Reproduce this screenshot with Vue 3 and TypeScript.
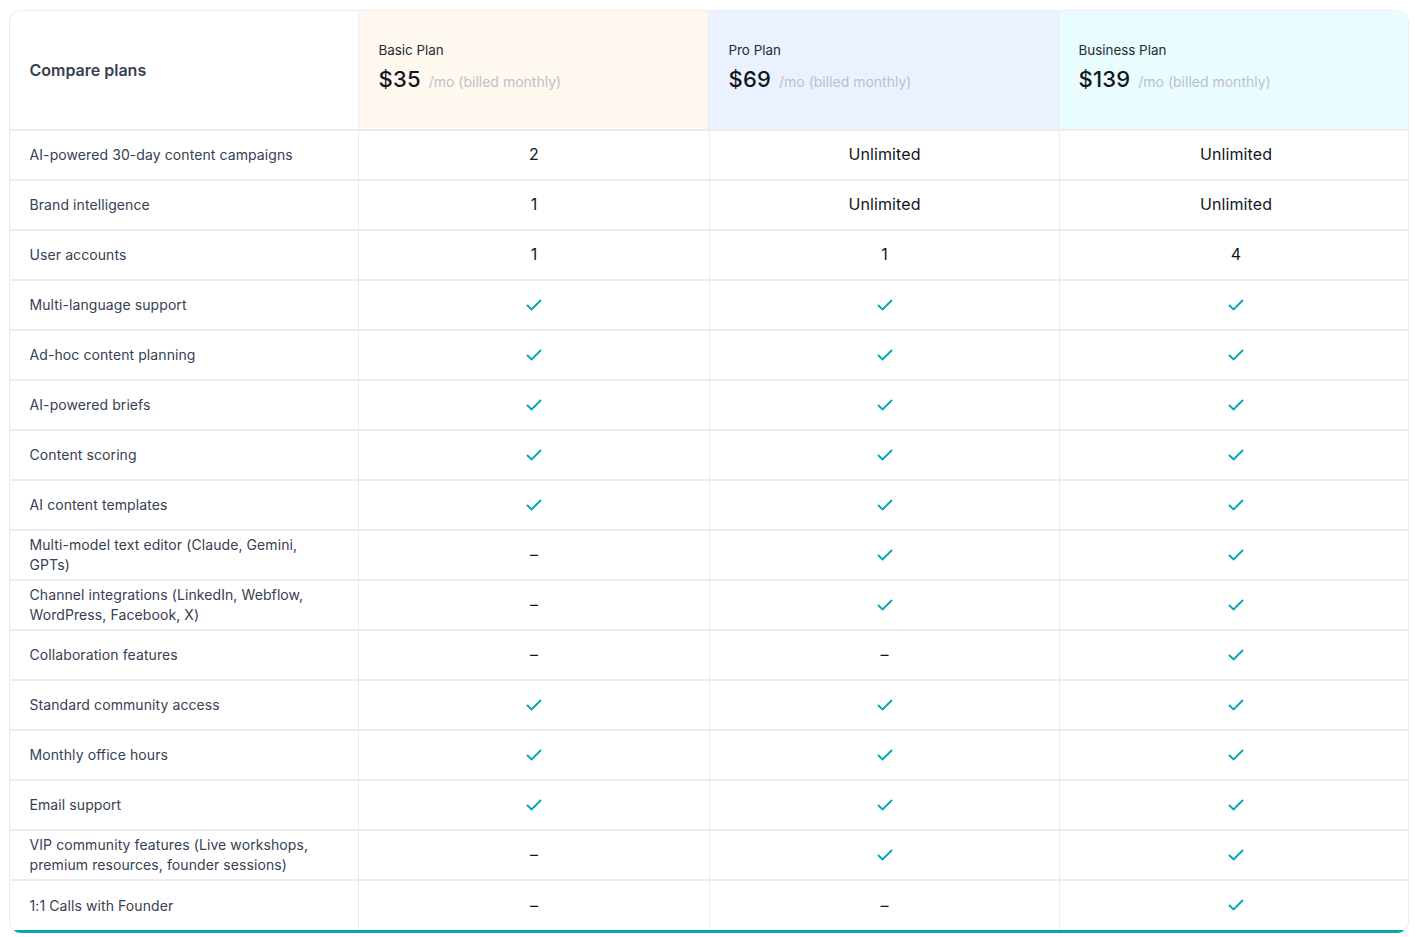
<script setup lang="ts">
interface Plan {
  name: string
  price: string
  tone: string
}

interface Feature {
  label: string
  values: string[]
}

const plans: Plan[] = [
  { name: 'Basic Plan', price: '$35', tone: 'basic' },
  { name: 'Pro Plan', price: '$69', tone: 'pro' },
  { name: 'Business Plan', price: '$139', tone: 'business' },
]

// "y" = check mark, "-" = not included, anything else is printed as is
const features: Feature[] = [
  { label: 'AI-powered 30-day content campaigns', values: ['2', 'Unlimited', 'Unlimited'] },
  { label: 'Brand intelligence', values: ['1', 'Unlimited', 'Unlimited'] },
  { label: 'User accounts', values: ['1', '1', '4'] },
  { label: 'Multi-language support', values: ['y', 'y', 'y'] },
  { label: 'Ad-hoc content planning', values: ['y', 'y', 'y'] },
  { label: 'AI-powered briefs', values: ['y', 'y', 'y'] },
  { label: 'Content scoring', values: ['y', 'y', 'y'] },
  { label: 'AI content templates', values: ['y', 'y', 'y'] },
  { label: 'Multi-model text editor (Claude, Gemini, GPTs)', values: ['-', 'y', 'y'] },
  { label: 'Channel integrations (LinkedIn, Webflow, WordPress, Facebook, X)', values: ['-', 'y', 'y'] },
  { label: 'Collaboration features', values: ['-', '-', 'y'] },
  { label: 'Standard community access', values: ['y', 'y', 'y'] },
  { label: 'Monthly office hours', values: ['y', 'y', 'y'] },
  { label: 'Email support', values: ['y', 'y', 'y'] },
  { label: 'VIP community features (Live workshops, premium resources, founder sessions)', values: ['-', 'y', 'y'] },
  { label: '1:1 Calls with Founder', values: ['-', '-', 'y'] },
]
</script>

<template>
  <div class="page">
    <div class="compare">
      <div class="row head">
        <div class="cell title">Compare plans</div>
        <div v-for="plan in plans" :key="plan.name" class="cell plan" :class="plan.tone">
          <div class="plan-name">{{ plan.name }}</div>
          <div class="plan-price">
            <span class="price">{{ plan.price }}</span>
            <span class="period">/mo (billed monthly)</span>
          </div>
        </div>
      </div>

      <div v-for="feature in features" :key="feature.label" class="row">
        <div class="cell label">{{ feature.label }}</div>
        <div v-for="(value, index) in feature.values" :key="index" class="cell value">
          <svg v-if="value === 'y'" class="check" viewBox="0 0 16 12" fill="none">
            <path d="M1 6 5.6 10.4 15 1" stroke="currentColor" stroke-width="1.9" />
          </svg>
          <span v-else-if="value === '-'">–</span>
          <span v-else>{{ value }}</span>
        </div>
      </div>
    </div>
  </div>
</template>

<style>
body {
  background: #fff;
}
</style>

<style scoped>
.page {
  padding: 10px 11px 4px 9px;
  font-family: Inter, "Liberation Sans", sans-serif;
}

.compare {
  border: 1px solid #ebebf0;
  border-bottom: 0;
  border-radius: 12px;
  overflow: hidden;
}

.row {
  display: grid;
  grid-template-columns: 348px 351px 350px 1fr;
  height: 50px;
  border-bottom: 2px solid #ebebf0;
  box-sizing: border-box;
}

.row:last-child {
  height: 52px;
  border-bottom: 3px solid #00a8b5;
}

.row.head {
  grid-template-columns: 348px 350px 350px 1fr;
  height: 120px;
}

.cell {
  display: flex;
  align-items: center;
  border-left: 1px solid #ebebf0;
  min-width: 0;
}

.cell:first-child {
  border-left: 0;
}

.title {
  padding-left: 19.5px;
  font-size: 16px;
  font-weight: 600;
  color: #364152;
}

.plan {
  flex-direction: column;
  align-items: flex-start;
  justify-content: center;
  padding: 0 0 5px 19.5px;
}

.basic {
  background: #fff8ef;
}

.pro {
  background: #ebf2ff;
}

.business {
  background: #e9fdff;
}

.plan-name {
  font-size: 13.4px;
  line-height: 20px;
  color: #252a33;
}

.plan-price {
  display: flex;
  align-items: baseline;
  gap: 8px;
  margin-top: 3px;
}

.price {
  font-size: 22px;
  line-height: 32px;
  font-weight: 500;
  letter-spacing: 0.2px;
  color: #12161d;
}

.period {
  font-size: 14px;
  color: #bcc1c9;
}

.label {
  padding: 0 40px 0 19.5px;
  font-size: 14px;
  line-height: 20px;
  letter-spacing: 0.09px;
  color: #364152;
}

.value {
  justify-content: center;
  padding-bottom: 2px;
  font-size: 16px;
  letter-spacing: 0.1px;
  color: #12161d;
}

.value:last-child {
  padding-left: 4px;
}

.check {
  width: 16px;
  height: 12px;
  margin-top: 1px;
  color: #00a8b5;
}
</style>
